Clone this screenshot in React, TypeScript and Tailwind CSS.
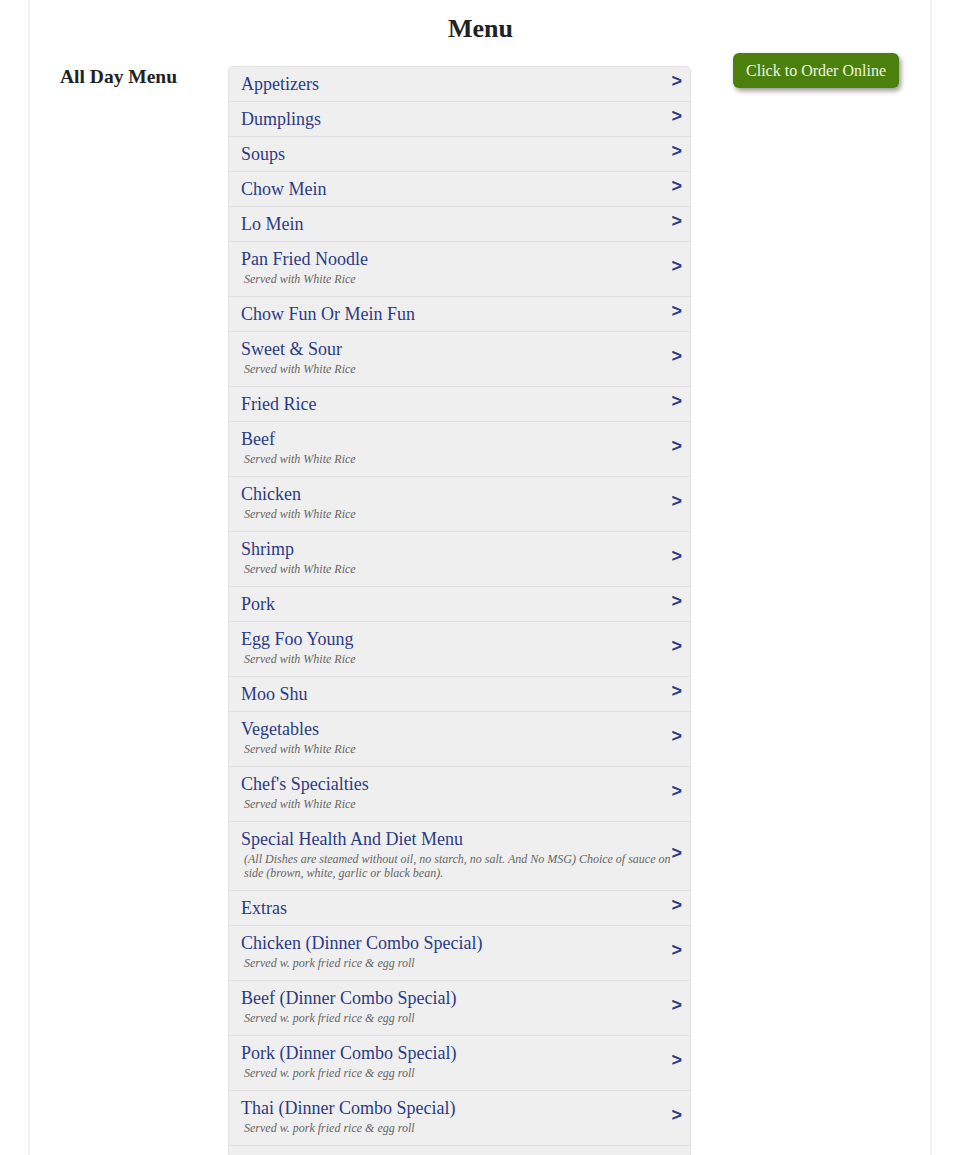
import React from 'react';

// menu categories, note is the small italic line under the name
const CATEGORIES: { name: string; note?: string }[] = [
  { name: "Appetizers" },
  { name: "Dumplings" },
  { name: "Soups" },
  { name: "Chow Mein" },
  { name: "Lo Mein" },
  { name: "Pan Fried Noodle", note: "Served with White Rice" },
  { name: "Chow Fun Or Mein Fun" },
  { name: "Sweet & Sour", note: "Served with White Rice" },
  { name: "Fried Rice" },
  { name: "Beef", note: "Served with White Rice" },
  { name: "Chicken", note: "Served with White Rice" },
  { name: "Shrimp", note: "Served with White Rice" },
  { name: "Pork" },
  { name: "Egg Foo Young", note: "Served with White Rice" },
  { name: "Moo Shu" },
  { name: "Vegetables", note: "Served with White Rice" },
  { name: "Chef's Specialties", note: "Served with White Rice" },
  {
    name: "Special Health And Diet Menu",
    note: "(All Dishes are steamed without oil, no starch, no salt. And No MSG) Choice of sauce on side (brown, white, garlic or black bean).",
  },
  { name: "Extras" },
  { name: "Chicken (Dinner Combo Special)", note: "Served w. pork fried rice & egg roll" },
  { name: "Beef (Dinner Combo Special)", note: "Served w. pork fried rice & egg roll" },
  { name: "Pork (Dinner Combo Special)", note: "Served w. pork fried rice & egg roll" },
  { name: "Thai (Dinner Combo Special)", note: "Served w. pork fried rice & egg roll" },
  { name: "Chinese (Dinner Combo Special)", note: "Served w. pork fried rice & egg roll" },
];

export default function App() {
  return (
    <div className="bg-white min-h-[1155px] font-['Liberation_Serif',serif] text-[#222]">
      <div className="mx-[28px] border-x-2 border-[#f2f2f2] min-h-[1155px] pl-[30px] pr-[29px]">
        <h1 className="pt-[14px] h-[44px] text-center text-[26px] leading-[30px] font-bold">Menu</h1>

        <div className="flex mt-[9px]">
          {/* left column */}
          <div className="w-[168px] shrink-0 pt-[13px]">
            <h2 className="text-[19.5px] leading-[22px] font-bold">All Day Menu</h2>
          </div>

          {/* category list */}
          <div className="w-[463px] shrink-0 mt-[13px] rounded-t-[5px] border border-[#e2e2e2] bg-[#efefef] overflow-hidden">
            {CATEGORIES.map((c, i) => (
              <div
                key={c.name}
                className={`flex items-center pl-[12px] pr-[8px] ${i > 0 ? 'border-t border-[#dedede]' : ''}`}
              >
                <div className="flex-1 pt-[7px] pb-[6px] mr-[-10px]">
                  <div className="text-[18px] leading-[21px] text-[#2b3b87]">{c.name}</div>
                  {c.note && (
                    <div className="pl-[3px] pt-[2px] pb-[4px] text-[12px] leading-[14px] italic text-[#666]">{c.note}</div>
                  )}
                </div>
                <span className="relative font-['Liberation_Sans',sans-serif] font-bold text-[18px] leading-[18px] text-[#2b3b87] mb-[6px] ml-[1px]">
                  &gt;
                </span>
              </div>
            ))}
          </div>

          {/* order button */}
          <div className="ml-[42px]">
            <button className="h-[35px] w-[166px] rounded-[6px] bg-[#4b800c] text-[16px] text-[#eef7e0] shadow-[2px_3px_5px_rgba(0,0,0,0.4)]">
              Click to Order Online
            </button>
          </div>
        </div>
      </div>
    </div>
  );
}
